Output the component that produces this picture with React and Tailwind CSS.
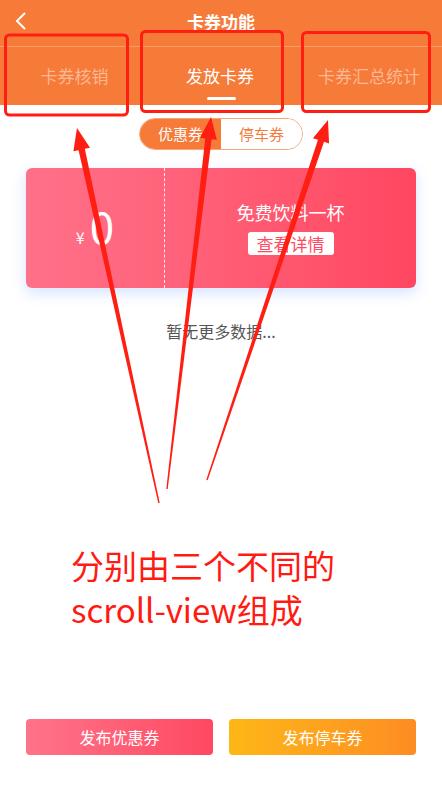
import React from "react";

const font = { fontFamily: '"Noto Sans CJK SC", "Noto Sans", sans-serif' };

// tapered red arrow from tail to tip, like a hand-drawn markup arrow
const arrowPoints = (tx, ty, px, py) => {
  const len = Math.hypot(px - tx, py - ty);
  const dx = (px - tx) / len;
  const dy = (py - ty) / len;
  const nx = -dy;
  const ny = dx;
  const bx = px - dx * 22;
  const by = py - dy * 22;
  const pts = [
    [tx + nx * 0.7, ty + ny * 0.7],
    [bx + nx * 3.2, by + ny * 3.2],
    [bx + nx * 8.5, by + ny * 8.5],
    [px, py],
    [bx - nx * 8.5, by - ny * 8.5],
    [bx - nx * 3.2, by - ny * 3.2],
    [tx - nx * 0.7, ty - ny * 0.7],
  ];
  return pts.map((p) => p.join(",")).join(" ");
};

const Annotations = () => (
  <svg className="absolute inset-0 pointer-events-none" width="442" height="787">
    <rect x="5.5" y="35" width="122" height="80" rx="4" fill="none" stroke="#ff1f12" strokeWidth="3" />
    <rect x="141.5" y="31.5" width="141" height="80" rx="4" fill="none" stroke="#ff1f12" strokeWidth="3" />
    <rect x="302.5" y="32.5" width="127" height="79" rx="4" fill="none" stroke="#ff1f12" strokeWidth="3" />
    <polygon points={arrowPoints(159, 503, 77, 128)} fill="#ff1f12" />
    <polygon points={arrowPoints(167, 489, 211, 117)} fill="#ff1f12" />
    <polygon points={arrowPoints(207, 480, 328, 120)} fill="#ff1f12" />
  </svg>
);

const App = () => {
  return (
    <div className="relative w-[442px] h-[787px] overflow-hidden bg-white flex flex-col" style={font}>
      {/* header */}
      <div className="bg-[#f67a38] h-[105px] flex flex-col">
        <div className="relative h-[47px] flex items-center justify-center border-b border-[#f99a66]">
          <svg className="absolute left-[14px] top-[11px]" width="14" height="20" viewBox="0 0 14 20">
            <polyline points="11,2 3,10 11,18" fill="none" stroke="white" strokeWidth="2" />
          </svg>
          <span className="text-white text-[17px] font-bold -mt-[3px]">卡券功能</span>
        </div>
        <div className="flex-1 flex">
          <div className="w-[147px] flex items-center justify-center text-[17px] text-[#fbb893]">
            <span className="ml-[2px]">卡券核销</span>
          </div>
          <div className="w-[148px] relative flex items-center justify-center text-[17px] text-white">
            <span className="-ml-[2px]">发放卡券</span>
            <div className="absolute bottom-[5px] left-[60px] w-[29px] h-[3px] rounded-full bg-white" />
          </div>
          <div className="w-[147px] flex items-center justify-center text-[17px] text-[#fbb893]">
            <span className="ml-[1px]">卡券汇总统计</span>
          </div>
        </div>
      </div>

      {/* coupon type toggle */}
      <div className="flex justify-center mt-[13px]">
        <div className="flex w-[164px] h-[32px] rounded-full border border-[#f5a57a] overflow-hidden text-[15px]">
          <div className="flex-1 bg-[#f67a38] text-white flex items-center justify-center">优惠券</div>
          <div className="flex-1 bg-white text-[#f67a38] flex items-center justify-center">停车券</div>
        </div>
      </div>

      {/* coupon card */}
      <div className="mx-[26px] mt-[18px] h-[120px] rounded-[6px] flex bg-gradient-to-r from-[#ff7189] to-[#ff4661] shadow-[0_5px_14px_rgba(120,160,255,0.3)]">
        <div className="w-[139px] flex items-baseline justify-center pt-[35px] text-white border-r border-dashed border-white/90">
          <span className="text-[16px] leading-[16px] mr-[5px]">¥</span>
          <span className="text-[44px] leading-[44px]">0</span>
        </div>
        <div className="flex-1 flex flex-col items-center pt-[32px]">
          <span className="text-white text-[18px] leading-[25px]">免费饮料一杯</span>
          <button className="mt-[7px] w-[86px] h-[23px] bg-white rounded-[3px] text-[#ff4a64] text-[17px] leading-[23px]">
            查看详情
          </button>
        </div>
      </div>

      <div className="text-center text-[#555] text-[16px] mt-[31px]">暂无更多数据...</div>

      {/* bottom actions */}
      <div className="mt-auto mb-[32px] px-[26px] flex gap-[16px]">
        <button className="flex-1 h-[36px] rounded-[4px] text-white text-[16px] bg-gradient-to-r from-[#ff7389] to-[#ff4762]">
          发布优惠券
        </button>
        <button className="flex-1 h-[36px] rounded-[4px] text-white text-[16px] bg-gradient-to-r from-[#fdb716] to-[#fd8c22]">
          发布停车券
        </button>
      </div>

      <Annotations />
      <div className="absolute left-[71px] top-[543px] text-[#ff1a12] text-[33px] leading-[44px]">
        <div>分别由三个不同的</div>
        <div>scroll-view组成</div>
      </div>
    </div>
  );
};

export default App;
